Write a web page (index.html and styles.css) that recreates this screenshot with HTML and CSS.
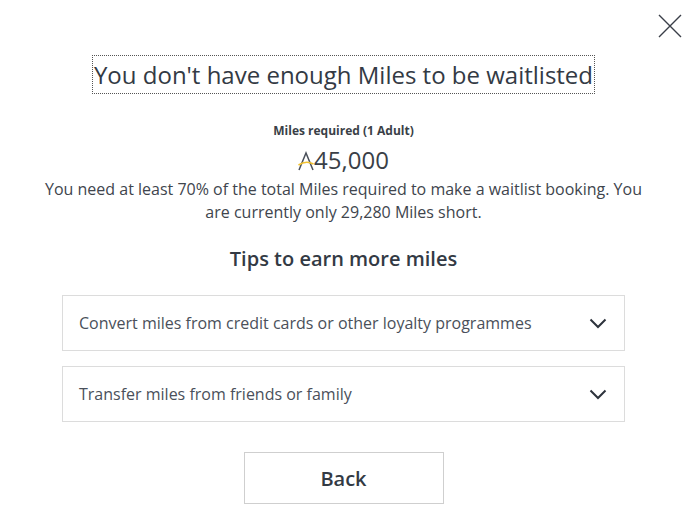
FILE: index.html
```html
<!DOCTYPE html>
<html lang="en">
<head>
<meta charset="utf-8">
<title>Waitlist</title>
<link rel="stylesheet" href="styles.css">
</head>
<body>
<div class="dialog">
  <button class="close" aria-label="Close">
    <svg width="24" height="24" viewBox="0 0 24 24"><path d="M1 1L23 23M23 1L1 23" stroke="#3a3f48" stroke-width="1.4" fill="none"/></svg>
  </button>
  <h1 class="title">You don't have enough Miles to be waitlisted</h1>
  <div class="req-label">Miles required (1 Adult)</div>
  <div class="req-amount">
    <svg class="miles-icon" width="16" height="20" viewBox="0 0 16 20"><path d="M1 19L8 2L15 19" stroke="#4a505a" stroke-width="1.5" fill="none"/><path d="M0.5 14Q8 9 15.5 13" stroke="#f2c230" stroke-width="1.6" fill="none"/></svg><span>45,000</span>
  </div>
  <p class="note">You need at least 70% of the total Miles required to make a waitlist booking. You are currently only 29,280 Miles short.</p>
  <h2 class="tips">Tips to earn more miles</h2>
  <div class="accordion">
    <div class="acc-item">
      <span>Convert miles from credit cards or other loyalty programmes</span>
      <svg width="18" height="12" viewBox="0 0 18 12"><path d="M1.5 2.5L9 10L16.5 2.5" stroke="#2d333c" stroke-width="2" fill="none"/></svg>
    </div>
    <div class="acc-item">
      <span>Transfer miles from friends or family</span>
      <svg width="18" height="12" viewBox="0 0 18 12"><path d="M1.5 2.5L9 10L16.5 2.5" stroke="#2d333c" stroke-width="2" fill="none"/></svg>
    </div>
  </div>
  <button class="back">Back</button>
</div>
</body>
</html>
```
FILE: styles.css
```css
* { box-sizing: border-box; }
html, body { margin: 0; background: #fff; }
body { font-family: "Open Sans", "Noto Sans", sans-serif; color: #333a44; }
.dialog {
  position: relative;
  width: 696px;
  height: 530px;
  display: flex;
  flex-direction: column;
  align-items: center;
  padding: 55px 9px 0 0;
}
.close {
  position: absolute;
  top: 14px;
  right: 14px;
  width: 24px;
  height: 24px;
  padding: 0;
  border: 0;
  background: none;
}
.close svg { display: block; }
.title {
  margin: 0;
  font-size: 24px;
  font-weight: 400;
  line-height: 37px;
  padding: 0 1px;
  border: 1px dotted #555;
  color: #333a44;
}
.req-label {
  margin-top: 29px;
  font-size: 12px;
  font-weight: 700;
  line-height: 16px;
  color: #3a3f47;
}
.req-amount {
  margin-top: 5px;
  display: flex;
  align-items: center;
  font-size: 24px;
  line-height: 32px;
  color: #3a3f47;
}
.miles-icon { margin-right: 0; margin-top: 1px; }
.note {
  margin: 2px 0 0;
  width: 605px;
  text-align: center;
  font-size: 16px;
  line-height: 23px;
  color: #40454d;
}
.tips {
  margin: 21px 0 0;
  font-size: 20px;
  font-weight: 600;
  line-height: 28px;
  color: #333a44;
}
.accordion {
  margin-top: 22px;
  width: 563px;
  display: flex;
  flex-direction: column;
  gap: 15px;
}
.acc-item {
  height: 56px;
  border: 1px solid #dcdcdc;
  display: flex;
  align-items: center;
  justify-content: space-between;
  padding: 0 17px 0 16px;
  font-size: 16px;
  color: #4a505a;
}
.back {
  margin-top: 30px;
  width: 200px;
  height: 52px;
  border: 1px solid #cfcfcf;
  background: #fff;
  font-family: inherit;
  font-size: 20px;
  font-weight: 600;
  color: #333a44;
}
```
